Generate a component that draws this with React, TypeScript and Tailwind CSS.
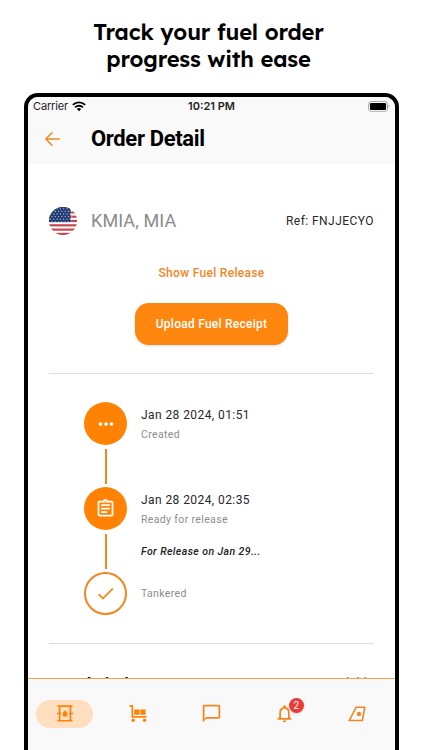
import type { ReactNode } from "react";
import {
    MdCheck,
    MdMoreHoriz,
    MdNotificationsNone,
    MdOutlineAssignment,
    MdOutlineChatBubbleOutline,
} from "react-icons/md";

const StatusBar = () => {
    return (
        <div className="flex h-[18px] items-center pl-[5px] pr-[5px] font-['Inter'] text-[11px] leading-none">
            <div className="flex flex-1 items-center gap-[4px]">
                <span className="tracking-[-0.15px] text-[#222]">Carrier</span>
                <svg width="14" height="11" viewBox="0 0 13 10" fill="none" stroke="#000" strokeWidth="1.8">
                    <path d="M0.8 3.5a8.2 8.2 0 0 1 11.4 0" />
                    <path d="M2.9 5.8a5.1 5.1 0 0 1 7.2 0" />
                    <path d="M4.5 7.3a2.9 2.9 0 0 1 4 0L6.5 9.5z" fill="#000" stroke="none" />
                </svg>
            </div>
            <span className="font-semibold text-[#222]">10:21 PM</span>
            <div className="flex flex-1 justify-end">
                <svg width="22" height="11" viewBox="0 0 22 11">
                    <rect x="0.5" y="0.5" width="19" height="9.8" rx="2.6" fill="#fff" stroke="#aaa" />
                    <rect x="1.9" y="1.9" width="16.2" height="7" rx="1.2" fill="#000" />
                    <path d="M20.6 3.8v3q1-.4 1-1.5t-1-1.5" fill="#aaa" />
                </svg>
            </div>
        </div>
    );
};

const Header = () => {
    return (
        <div className="flex h-[49px] items-center pb-[1px] pl-[17px]">
            <svg width="16" height="16" viewBox="0 0 16 16" fill="none" stroke="#f5861f" strokeWidth="1.5" strokeLinecap="round" strokeLinejoin="round">
                <path d="M14.2 8H0.900M7 1.700L0.800 8l6.200 6.300" />
            </svg>
            <h1 className="ml-[30px] text-[22px] font-bold leading-none tracking-[-0.35px] text-black">Order Detail</h1>
        </div>
    );
};

const UsFlag = () => {
    const stars = [];
    for (let row = 0; row < 6; row++) {
        for (let col = 0; col < 7; col++) {
            stars.push(<circle key={`${row}-${col}`} cx={1.5 + col * 3.3 + (row % 2) * 1.5} cy={1.8 + row * 2.6} r="0.65" fill="#c3cce0" />);
        }
    }

    return (
        <svg width="28" height="28" viewBox="0 0 28 28">
            <clipPath id="flag">
                <circle cx="14" cy="14" r="14" />
            </clipPath>
            <g clipPath="url(#flag)">
                <rect width="28" height="28" fill="#fff" />
                {[0, 1, 2, 3, 4, 5, 6].map((i) => (
                    <rect key={i} y={i * 4.31} width="28" height="2.15" fill="#c9414b" />
                ))}
                <rect width="21.5" height="15.1" fill="#1f3d74" />
                {stars}
            </g>
        </svg>
    );
};

interface StepProps {
    icon: ReactNode;
    pending?: boolean;
    last?: boolean;
    date?: string;
    label: string;
    note?: string;
}

const Step = ({ icon, pending, last, date, label, note }: StepProps) => {
    return (
        <div className={last ? "flex h-[43px]" : "flex h-[85px]"}>
            <div className="flex w-[43px] flex-col items-center">
                <div
                    className={
                        pending
                            ? "flex size-[43px] shrink-0 items-center justify-center rounded-full border-2 border-[#f5861f] text-[#f5861f]"
                            : "flex size-[43px] shrink-0 items-center justify-center rounded-full bg-[#ff8205] text-white"
                    }
                >
                    {icon}
                </div>
                {!last && <div className="mt-[4px] h-[35px] w-[2px] bg-[#f5861f]" />}
            </div>
            <div className={date ? "ml-[14px] pt-[5px]" : "ml-[14px] flex items-center"}>
                {date && <p className="text-[12px] leading-[16px] tracking-[0.42px] text-[#27272b]">{date}</p>}
                <p className={date ? "mt-[5px] text-[10.5px] leading-[14px] tracking-[0.35px] text-[#8d8d8d]" : "text-[10.5px] leading-[14px] tracking-[0.35px] text-[#8d8d8d]"}>
                    {label}
                </p>
                {note && <p className="mt-[18px] text-[10.5px] font-medium italic leading-[14px] tracking-[0.42px] text-[#222]">{note}</p>}
            </div>
        </div>
    );
};

const BarrelIcon = () => {
    return (
        <svg width="16" height="17" viewBox="0 0 16 17" fill="none" stroke="#ff8205" strokeWidth="1.6">
            <path d="M0.5 1.1h15M0.5 15.7h15M2.6 1v15M13.4 1v15M0 8.5h4M12 8.5h4" />
            <path d="M8 5.2c1.2 1.5 2.5 2.6 2.5 4.1a2.5 2.5 0 0 1-5 0c0-1.5 1.3-2.6 2.5-4.1z" fill="#ff8205" stroke="none" />
        </svg>
    );
};

const TrolleyIcon = () => {
    return (
        <svg width="18" height="17" viewBox="0 0 18 17" fill="#ff8205">
            <path d="M0.5 0h3.7v11H17.5v1.7H2.5V1.7H0.5z" />
            <rect x="5.2" y="4.5" width="5.3" height="5.3" />
            <rect x="11.3" y="4.5" width="5.3" height="5.3" />
            <circle cx="4.2" cy="15.2" r="1.7" />
            <circle cx="15.5" cy="15.2" r="1.7" />
        </svg>
    );
};

const TailIcon = () => {
    return (
        <svg width="18" height="16" viewBox="0 0 18 16" fill="none" stroke="#f5861f" strokeWidth="1.6">
            <path d="M8.2 1.2h8.5L14.4 14.5H1.3z" />
            <circle cx="11" cy="8" r="2.2" fill="#f5861f" stroke="none" />
        </svg>
    );
};

const BottomNav = () => {
    return (
        <nav className="flex h-[72px] shrink-0 border-t border-[#f0a052] bg-[#f9f9f9] pr-px pt-[18px]">
            <div className="flex h-[33px] flex-1 items-center justify-center">
                <div className="flex h-[28px] w-[57px] shrink-0 items-center justify-center rounded-full bg-[#ffdfbf]">
                    <BarrelIcon />
                </div>
            </div>
            <div className="flex h-[33px] flex-1 items-center justify-center">
                <TrolleyIcon />
            </div>
            <div className="flex h-[33px] flex-1 items-center justify-center">
                <MdOutlineChatBubbleOutline size={21} color="#f5861f" />
            </div>
            <div className="flex h-[33px] flex-1 items-center justify-center">
                <div className="relative">
                    <MdNotificationsNone size={21} color="#f5861f" />
                    <span className="absolute -top-[5px] left-[15px] flex size-[15px] items-center justify-center rounded-full bg-[#e93c37] text-[10px] leading-none text-white shadow">2</span>
                </div>
            </div>
            <div className="flex h-[33px] flex-1 items-center justify-center">
                <TailIcon />
            </div>
        </nav>
    );
};

export default function App() {
    return (
        <div className="flex h-[750px] w-[422px] flex-col overflow-hidden bg-white font-['Roboto',sans-serif]">
            <h2 className="h-[93px] shrink-0 pt-[19px] text-center font-['Lexend','Inter',sans-serif] text-[22px] font-semibold leading-[27px] tracking-[-0.15px] text-black">
                <span className="block pr-[5px]">Track your fuel order</span>
                <span className="block pr-[5px]">progress with ease</span>
            </h2>
            <div className="ml-[24px] flex min-h-0 w-[375px] flex-1 flex-col overflow-hidden rounded-t-[14px] border-x-4 border-t-4 border-black bg-white">
                <div className="h-[67px] shrink-0 bg-[#f9f9f9]">
                    <StatusBar />
                    <Header />
                </div>

                <main className="flex min-h-0 flex-1 flex-col overflow-hidden px-[21px] pt-[42px]">
                    <div className="flex h-[30px] shrink-0 items-center">
                        <UsFlag />
                        <span className="ml-[14px] text-[18px] leading-none tracking-[0.1px] text-[#8b8b8b]">KMIA, MIA</span>
                        <span className="ml-auto text-[12px] leading-none tracking-[0.45px] text-[#27272b]">Ref: FNJJECYO</span>
                    </div>

                    <div className="mt-[29px] flex shrink-0 flex-col items-center">
                        <button className="text-[12px] font-medium leading-[16px] tracking-[0.3px] text-[#f5861f]">Show Fuel Release</button>
                        <button className="mt-[22px] h-[42px] w-[153px] rounded-[14px] bg-[#ff870f] text-[12px] font-medium tracking-[0.25px] text-white shadow-sm">
                            Upload Fuel Receipt
                        </button>
                    </div>

                    <hr className="mt-[28px] shrink-0 border-[#dedede]" />

                    <div className="ml-[35px] mt-[28px] shrink-0">
                        <Step icon={<MdMoreHoriz size={22} />} date="Jan 28 2024, 01:51" label="Created" />
                        <Step
                            icon={<MdOutlineAssignment size={21} />}
                            date="Jan 28 2024, 02:35"
                            label="Ready for release"
                            note="For Release on Jan 29..."
                        />
                        <Step icon={<MdCheck size={21} />} label="Tankered" pending last />
                    </div>

                    <hr className="mt-[28px] shrink-0 border-[#dedede]" />

                    <div className="ml-[35px] mt-[28px] flex shrink-0 justify-between leading-[22px]">
                        <span className="text-[15px] font-bold text-black">Arrival</span>
                        <span className="text-[12px] tracking-[0.45px] text-[#555]">Not available</span>
                    </div>
                </main>

                <BottomNav />
            </div>
        </div>
    );
}
